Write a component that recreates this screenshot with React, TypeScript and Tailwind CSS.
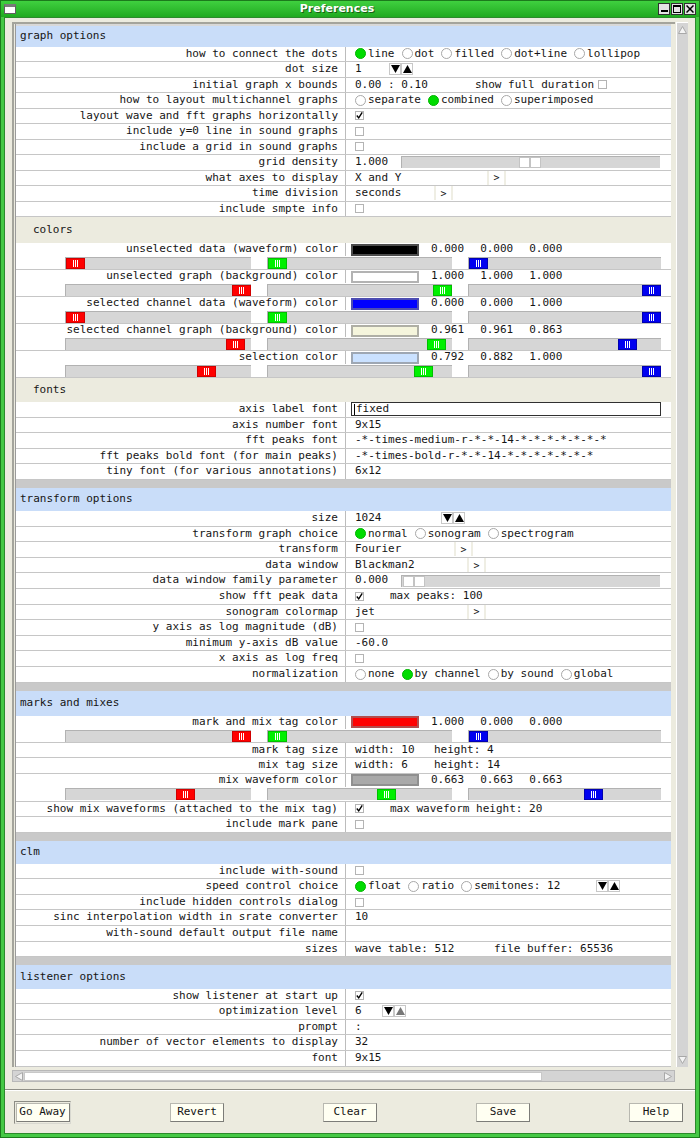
import React from "react";

type Kids = { children?: React.ReactNode };

function Radio({ on, label }: { on?: boolean; label: string }) {
  return (
    <span className="flex items-center gap-[2px]">
      <span
        className={
          on
            ? "w-[11px] h-[11px] rounded-full bg-[#00dc00] border border-[#00b400]"
            : "w-[11px] h-[11px] rounded-full bg-white border border-[#a8a8a8]"
        }
      />
      <span>{label}</span>
    </span>
  );
}

function Check({ on }: { on?: boolean }) {
  return (
    <span className="w-[9px] h-[9px] border border-[#b4b4b4] bg-white flex items-center justify-center">
      {on && (
        <svg width="9" height="9" viewBox="0 0 9 9">
          <path d="M1 4.5 L3.5 7.5 L8 0.5" stroke="#000" strokeWidth="1.8" fill="none" />
        </svg>
      )}
    </span>
  );
}

function Arrows({ dim }: { dim?: boolean }) {
  return (
    <span className="flex">
      <span className="w-[12px] h-[12px] bg-white border border-[#c8c8c8] flex items-center justify-center">
        <svg width="9" height="8" viewBox="0 0 9 8">
          <path d="M0 0 H9 L4.5 8 Z" fill="#000" />
        </svg>
      </span>
      <span className="w-[12px] h-[12px] bg-white border border-[#c8c8c8] flex items-center justify-center">
        <svg width="9" height="8" viewBox="0 0 9 8">
          <path d="M4.5 0 L9 8 H0 Z" fill={dim ? "#777" : "#000"} />
        </svg>
      </span>
    </span>
  );
}

function Drop() {
  return (
    <span className="h-[14px] w-[19px] border-x-2 border-[#efeee4] flex items-center justify-center text-[10px]">
      &gt;
    </span>
  );
}

function Header({ children, h }: Kids & { h: string }) {
  return (
    <div className={`${h} bg-[#c9ddf9] flex items-center pl-[4px] shrink-0`}>{children}</div>
  );
}

function SubHeader({ children, h }: Kids & { h: string }) {
  return (
    <div className={`${h} bg-[#ecebdf] flex items-center pl-[17px] shrink-0`}>{children}</div>
  );
}

function Label({ children }: Kids) {
  return (
    <div className="w-[330px] shrink-0 border-r border-[#bcbcbc] pr-[7px] flex items-center justify-end whitespace-nowrap">
      {children}
    </div>
  );
}

function Row({ label, children, h = "h-[15.5px]" }: Kids & { label: string; h?: string }) {
  return (
    <div className={`flex ${h} shrink-0 border-b border-[#c6c6c6] bg-white`}>
      <Label>{label}</Label>
      <div className="flex-1 flex items-center pl-[9px] whitespace-nowrap">{children}</div>
    </div>
  );
}

// rows of the lower sections run a little taller
function TRow(props: Kids & { label: string }) {
  return <Row {...props} h="h-[15.6px]" />;
}

function Thumb({ color }: { color: string }) {
  return (
    <span className={`h-full w-[19px] flex items-center justify-center gap-[1px] ${color}`}>
      <span className="w-[1px] h-[7px] bg-white" />
      <span className="w-[1px] h-[7px] bg-white" />
      <span className="w-[1px] h-[7px] bg-white" />
    </span>
  );
}

function Slider({ w, v, color }: { w: number; v: number; color: string }) {
  return (
    <div
      className="relative h-[12px] bg-[#d6d6d6] border-t border-l border-[#b2b2b2]"
      style={{ width: w }}
    >
      <div className="absolute top-0 bottom-0" style={{ left: Math.round(v * (w - 20)) }}>
        <Thumb color={color} />
      </div>
    </div>
  );
}

function ColorRow({
  label,
  swatch,
  vals,
  h = "h-[27px]",
}: {
  label: string;
  swatch: string;
  vals: number[];
  h?: string;
}) {
  return (
    <div className={`${h} shrink-0 flex flex-col border-b border-[#c6c6c6] bg-white`}>
      <div className="flex h-[13px]">
        <Label>{label}</Label>
        <div className="flex-1 flex items-center pl-[5px]">
          <span
            className="w-[68px] h-[12px] border-2 border-[#80808099]"
            style={{ background: swatch }}
          />
          <span className="ml-[12px] flex gap-[16px]">
            {vals.map((x, i) => (
              <span key={i}>{x.toFixed(3)}</span>
            ))}
          </span>
        </div>
      </div>
      <div className="flex pl-[49px] gap-[16px] mt-[1px]">
        <Slider w={186} v={vals[0]} color="bg-[#ff0000] border border-[#d00000]" />
        <Slider w={185} v={vals[1]} color="bg-[#00f000] border border-[#00c000]" />
        <Slider w={193} v={vals[2]} color="bg-[#0000f0] border border-[#0000b0]" />
      </div>
    </div>
  );
}

function BigSlider({ pos }: { pos: number }) {
  return (
    <div className="relative ml-[13px] h-[12px] w-[259px] bg-[#d6d6d6] border-t border-l border-[#b2b2b2]">
      <div className="absolute top-0 bottom-0 flex" style={{ left: pos }}>
        <span className="w-[11px] h-full bg-white border border-[#c4c4c4]" />
        <span className="w-[11px] h-full bg-white border border-[#c4c4c4]" />
      </div>
    </div>
  );
}

function Btn({ children }: Kids) {
  return (
    <div className="w-[54px] h-[19px] bg-[#fffff2] border border-[#b8b8b0] border-r-[#7c7c78] border-b-[#7c7c78] flex items-center justify-center text-[11px]">
      {children}
    </div>
  );
}

export default function App() {
  return (
    <div className="w-[700px] h-[1138px] bg-[#45c845] flex flex-col font-['DejaVu_Sans_Mono',monospace] text-[11px] text-[#151515] overflow-hidden border border-[#1c7a1c]">
      {/* title bar */}
      <div className="h-[16px] shrink-0 flex items-center bg-gradient-to-b from-[#3fd03f] to-[#1faa1f] px-[3px]">
        <div className="w-[12px] h-[10px] bg-white border border-[#606060] border-t-[3px] border-t-[#7a7a7a]" />
        <div className="flex-1 text-center text-white font-bold text-[11px] font-['DejaVu_Sans',sans-serif] [text-shadow:1px_1px_0_#176017]">
          Preferences
        </div>
        <div className="flex gap-[1px]">
          <div className="w-[12px] h-[12px] bg-[#e4e4e4] border border-[#303030] flex items-end justify-center pb-[2px]">
            <span className="w-[7px] h-[2px] bg-black" />
          </div>
          <div className="w-[12px] h-[12px] bg-[#e4e4e4] border border-[#303030] flex items-center justify-center">
            <span className="w-[8px] h-[8px] border border-black border-t-2" />
          </div>
          <div className="w-[12px] h-[12px] bg-[#e4e4e4] border border-[#303030] flex items-center justify-center">
            <svg width="8" height="8" viewBox="0 0 8 8">
              <path d="M0.5 0.5 L7.5 7.5 M7.5 0.5 L0.5 7.5" stroke="#000" strokeWidth="1.5" />
            </svg>
          </div>
        </div>
      </div>

      {/* body */}
      <div className="flex-1 mx-[3px] mb-[3px] bg-[#ecebdf] border border-[#2c8a2c] flex flex-col min-h-0">
        <div className="mx-[7px] mt-[4px] h-[1062px] flex flex-col shrink-0">
          <div className="flex flex-1 min-h-0">
            {/* viewport */}
            <div className="flex-1 border-l-2 border-t-2 border-[#a4a49c] pl-[1px] pr-[4px] overflow-hidden">
              <div className="h-full bg-[#c9c9c9] border-l border-[#9a9a9a] flex flex-col gap-[8px] overflow-hidden">
                {/* graph options / colors / fonts */}
                <div className="flex flex-col shrink-0 border-t-2 border-[#d8d8d8]">
                  <Header h="h-[20.5px]">graph options</Header>
                  <Row label="how to connect the dots">
                    <span className="flex gap-[7px]">
                      <Radio on label="line" />
                      <Radio label="dot" />
                      <Radio label="filled" />
                      <Radio label="dot+line" />
                      <Radio label="lollipop" />
                    </span>
                  </Row>
                  <Row label="dot size">
                    <span className="w-[34px]">1</span>
                    <Arrows />
                  </Row>
                  <Row label="initial graph x bounds">
                    <span className="w-[120px]">0.00 : 0.10</span>
                    <span>show full duration</span>
                    <span className="ml-[4px]">
                      <Check />
                    </span>
                  </Row>
                  <Row label="how to layout multichannel graphs">
                    <span className="flex gap-[7px]">
                      <Radio label="separate" />
                      <Radio on label="combined" />
                      <Radio label="superimposed" />
                    </span>
                  </Row>
                  <Row label="layout wave and fft graphs horizontally">
                    <Check on />
                  </Row>
                  <Row label="include y=0 line in sound graphs">
                    <Check />
                  </Row>
                  <Row label="include a grid in sound graphs">
                    <Check />
                  </Row>
                  <Row label="grid density">
                    <span>1.000</span>
                    <BigSlider pos={117} />
                  </Row>
                  <Row label="what axes to display">
                    <span className="w-[132px]">X and Y</span>
                    <Drop />
                  </Row>
                  <Row label="time division">
                    <span className="w-[79px]">seconds</span>
                    <Drop />
                  </Row>
                  <Row label="include smpte info">
                    <Check />
                  </Row>

                  <SubHeader h="h-[26px]">colors</SubHeader>
                  <ColorRow label="unselected data (waveform) color" swatch="#000000" vals={[0, 0, 0]} />
                  <ColorRow label="unselected graph (background) color" swatch="#ffffff" vals={[1, 1, 1]} />
                  <ColorRow label="selected channel data (waveform) color" swatch="#0000ff" vals={[0, 0, 1]} />
                  <ColorRow
                    label="selected channel graph (background) color"
                    swatch="#f5f5dc"
                    vals={[0.961, 0.961, 0.863]}
                  />
                  <ColorRow label="selection color" swatch="#cae1ff" vals={[0.792, 0.882, 1]} />

                  <SubHeader h="h-[24px]">fonts</SubHeader>
                  <Row label="axis label font">
                    <span className="-ml-[4px] w-[310px] h-[14px] border border-[#303030] flex items-center pl-[2px]">
                      <span className="w-[1px] h-[11px] bg-black mr-[1px]" />
                      fixed
                    </span>
                  </Row>
                  <Row label="axis number font">9x15</Row>
                  <Row label="fft peaks font">-*-times-medium-r-*-*-14-*-*-*-*-*-*-*</Row>
                  <Row label="fft peaks bold font (for main peaks)">-*-times-bold-r-*-*-14-*-*-*-*-*-*-*</Row>
                  <Row label="tiny font (for various annotations)">6x12</Row>
                </div>

                {/* transform options */}
                <div className="flex flex-col shrink-0">
                  <Header h="h-[23.5px]">transform options</Header>
                  <TRow label="size">
                    <span className="w-[86px]">1024</span>
                    <Arrows />
                  </TRow>
                  <TRow label="transform graph choice">
                    <span className="flex gap-[7px]">
                      <Radio on label="normal" />
                      <Radio label="sonogram" />
                      <Radio label="spectrogram" />
                    </span>
                  </TRow>
                  <TRow label="transform">
                    <span className="w-[99px]">Fourier</span>
                    <Drop />
                  </TRow>
                  <TRow label="data window">
                    <span className="w-[112px]">Blackman2</span>
                    <Drop />
                  </TRow>
                  <TRow label="data window family parameter">
                    <span>0.000</span>
                    <BigSlider pos={1} />
                  </TRow>
                  <TRow label="show fft peak data">
                    <Check on />
                    <span className="ml-[26px]">max peaks: 100</span>
                  </TRow>
                  <TRow label="sonogram colormap">
                    <span className="w-[112px]">jet</span>
                    <Drop />
                  </TRow>
                  <TRow label="y axis as log magnitude (dB)">
                    <Check />
                  </TRow>
                  <TRow label="minimum y-axis dB value">-60.0</TRow>
                  <TRow label="x axis as log freq">
                    <Check />
                  </TRow>
                  <TRow label="normalization">
                    <span className="flex gap-[7px]">
                      <Radio label="none" />
                      <Radio on label="by channel" />
                      <Radio label="by sound" />
                      <Radio label="global" />
                    </span>
                  </TRow>
                </div>

                {/* marks and mixes */}
                <div className="flex flex-col shrink-0">
                  <Header h="h-[25px]">marks and mixes</Header>
                  <ColorRow label="mark and mix tag color" swatch="#ff0000" vals={[1, 0, 0]} />
                  <Row label="mark tag size">
                    <span className="w-[79px]">width: 10</span>
                    <span>height: 4</span>
                  </Row>
                  <Row label="mix tag size">
                    <span className="w-[79px]">width: 6</span>
                    <span>height: 14</span>
                  </Row>
                  <ColorRow label="mix waveform color" swatch="#a9a9a9" vals={[0.663, 0.663, 0.663]} h="h-[28px]" />
                  <Row label="show mix waveforms (attached to the mix tag)">
                    <Check on />
                    <span className="ml-[26px]">max waveform height: 20</span>
                  </Row>
                  <Row label="include mark pane">
                    <Check />
                  </Row>
                </div>

                {/* clm */}
                <div className="flex flex-col shrink-0">
                  <Header h="h-[23px]">clm</Header>
                  <TRow label="include with-sound">
                    <Check />
                  </TRow>
                  <TRow label="speed control choice">
                    <span className="flex gap-[7px] w-[241px]">
                      <Radio on label="float" />
                      <Radio label="ratio" />
                      <Radio label="semitones: 12" />
                    </span>
                    <Arrows />
                  </TRow>
                  <TRow label="include hidden controls dialog">
                    <Check />
                  </TRow>
                  <TRow label="sinc interpolation width in srate converter">10</TRow>
                  <TRow label="with-sound default output file name">
                    <span />
                  </TRow>
                  <TRow label="sizes">
                    <span className="w-[139px]">wave table: 512</span>
                    <span>file buffer: 65536</span>
                  </TRow>
                </div>

                {/* listener options */}
                <div className="flex flex-col shrink-0">
                  <Header h="h-[23.5px]">listener options</Header>
                  <TRow label="show listener at start up">
                    <Check on />
                  </TRow>
                  <TRow label="optimization level">
                    <span className="w-[27px]">6</span>
                    <Arrows dim />
                  </TRow>
                  <TRow label="prompt">:</TRow>
                  <TRow label="number of vector elements to display">32</TRow>
                  <TRow label="font">9x15</TRow>
                </div>
              </div>
            </div>

            {/* vertical scrollbar */}
            <div className="w-[12px] ml-[1px] bg-[#d4d4d4] border-l border-t border-[#ffffff] flex flex-col justify-between items-center py-[3px]">
              <svg width="9" height="8" viewBox="0 0 9 8">
                <path d="M4.5 0.5 L8.5 7.5 H0.5 Z" fill="#f4f4f4" stroke="#a8a8a8" />
              </svg>
              <svg width="9" height="8" viewBox="0 0 9 8">
                <path d="M0.5 0.5 H8.5 L4.5 7.5 Z" fill="#f4f4f4" stroke="#a8a8a8" />
              </svg>
            </div>
          </div>

          {/* horizontal scrollbar */}
          <div className="h-[12px] mt-[3px] mr-[13px] mb-[2px] bg-[#d4d4d4] border border-[#b8b8b8] flex items-center px-[2px]">
            <svg width="8" height="9" viewBox="0 0 8 9">
              <path d="M0.5 4.5 L7.5 0.5 V8.5 Z" fill="#f4f4f4" stroke="#a8a8a8" />
            </svg>
            <div className="ml-[1px] w-[518px] h-[9px] bg-white border border-[#c8c8c8]" />
            <div className="flex-1" />
            <svg width="8" height="9" viewBox="0 0 8 9">
              <path d="M7.5 4.5 L0.5 0.5 V8.5 Z" fill="#f4f4f4" stroke="#a8a8a8" />
            </svg>
          </div>
        </div>

        {/* separator */}
        <div className="mt-[5px] border-t border-[#8e8e86] border-b border-b-white" />

        {/* buttons */}
        <div className="flex-1 flex items-center justify-between pl-[9px] pr-[12px]">
          <div className="w-[57px] h-[23px] border border-[#8c8c84] border-r-[#d8d8d0] border-b-[#d8d8d0] flex items-center justify-center">
            <Btn>Go Away</Btn>
          </div>
          <Btn>Revert</Btn>
          <Btn>Clear</Btn>
          <Btn>Save</Btn>
          <Btn>Help</Btn>
        </div>
      </div>
    </div>
  );
}
